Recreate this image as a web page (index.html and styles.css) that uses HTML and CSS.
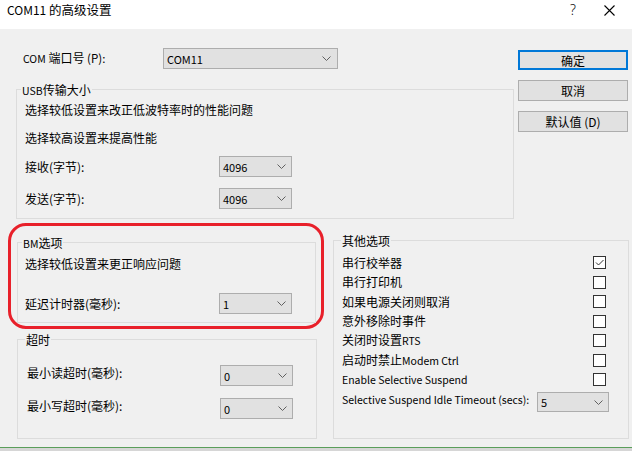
FILE: index.html
```html
<!DOCTYPE html>
<html lang="zh-CN">
<head>
<meta charset="utf-8">
<title>COM11 的高级设置</title>
<link rel="stylesheet" href="styles.css">
</head>
<body>
<div class="titlebar">
  <div class="title"><span class="en">COM11</span> 的高级设置</div>
  <div class="help">?</div>
  <svg class="close" width="11" height="11" viewBox="0 0 11 11"><path d="M0.5 0.5 L10.5 10.5 M10.5 0.5 L0.5 10.5" stroke="#000" stroke-width="1.1" fill="none"/></svg>
</div>

<div class="top">
  <div class="top-left">
    <div class="port-row">
      <span class="port-lbl"><span class="en">COM</span> 端口号 <span class="en en-p">(P):</span></span>
      <div class="combo combo-wide"><span class="en">COM11</span><svg class="chev" width="9" height="5" viewBox="0 0 9 5"><path d="M0.5 0.5 L4.5 4.5 L8.5 0.5" stroke="#606060" fill="none"/></svg></div>
    </div>
    <fieldset class="group usb">
      <legend><span class="en">USB</span>传输大小</legend>
      <div class="group-body usb-body">
        <div class="note note-1">选择较低设置来改正低波特率时的性能问题</div>
        <div class="note note-2">选择较高设置来提高性能</div>
        <div class="field-row row-recv"><span class="lbl">接收(字节):</span><div class="combo combo-small"><span class="en">4096</span><svg class="chev" width="9" height="5" viewBox="0 0 9 5"><path d="M0.5 0.5 L4.5 4.5 L8.5 0.5" stroke="#606060" fill="none"/></svg></div></div>
        <div class="field-row row-send"><span class="lbl">发送(字节):</span><div class="combo combo-small"><span class="en">4096</span><svg class="chev" width="9" height="5" viewBox="0 0 9 5"><path d="M0.5 0.5 L4.5 4.5 L8.5 0.5" stroke="#606060" fill="none"/></svg></div></div>
      </div>
    </fieldset>
  </div>
  <div class="buttons">
    <div class="btn btn-default">确定</div>
    <div class="btn">取消</div>
    <div class="btn">默认值 (D)</div>
  </div>
</div>

<div class="bottom">
  <div class="bottom-left">
    <div class="redmark">
      <fieldset class="group bm">
        <legend><span class="en">BM</span>选项</legend>
        <div class="group-body bm-body">
          <div class="note bm-note">选择较低设置来更正响应问题</div>
          <div class="field-row bm-row"><span class="lbl">延迟计时器(毫秒):</span><div class="combo combo-small"><span class="en">1</span><svg class="chev" width="9" height="5" viewBox="0 0 9 5"><path d="M0.5 0.5 L4.5 4.5 L8.5 0.5" stroke="#606060" fill="none"/></svg></div></div>
        </div>
      </fieldset>
    </div>
    <fieldset class="group timeout">
      <legend>超时</legend>
      <div class="group-body timeout-body">
        <div class="field-row to-row to-row-1"><span class="lbl">最小读超时(毫秒):</span><div class="combo combo-small"><span class="en">0</span><svg class="chev" width="9" height="5" viewBox="0 0 9 5"><path d="M0.5 0.5 L4.5 4.5 L8.5 0.5" stroke="#606060" fill="none"/></svg></div></div>
        <div class="field-row to-row to-row-2"><span class="lbl">最小写超时(毫秒):</span><div class="combo combo-small"><span class="en">0</span><svg class="chev" width="9" height="5" viewBox="0 0 9 5"><path d="M0.5 0.5 L4.5 4.5 L8.5 0.5" stroke="#606060" fill="none"/></svg></div></div>
      </div>
    </fieldset>
  </div>

  <fieldset class="group other">
    <legend>其他选项</legend>
    <div class="group-body other-body">
      <div class="opt-row"><span>串行校举器</span><span class="check"><svg width="11" height="11" viewBox="0 0 11 11"><path d="M2 5.5 L4.5 8 L9.5 3" stroke="#333" stroke-width="1" fill="none"/></svg></span></div>
      <div class="opt-row"><span>串行打印机</span><span class="check"></span></div>
      <div class="opt-row"><span>如果电源关闭则取消</span><span class="check"></span></div>
      <div class="opt-row"><span>意外移除时事件</span><span class="check"></span></div>
      <div class="opt-row"><span>关闭时设置<span class="en">RTS</span></span><span class="check"></span></div>
      <div class="opt-row"><span>启动时禁止<span class="en">Modem Ctrl</span></span><span class="check"></span></div>
      <div class="opt-row"><span class="en">Enable Selective Suspend</span><span class="check"></span></div>
      <div class="opt-row opt-last"><span class="en">Selective Suspend Idle Timeout (secs):</span><div class="combo combo-tiny"><span class="en">5</span><svg class="chev" width="9" height="5" viewBox="0 0 9 5"><path d="M0.5 0.5 L4.5 4.5 L8.5 0.5" stroke="#606060" fill="none"/></svg></div></div>
    </div>
  </fieldset>
</div>

<div class="footer"></div>
</body>
</html>
```
FILE: styles.css
```css
* { box-sizing: border-box; }
html, body { margin: 0; padding: 0; }
body {
  width: 632px;
  height: 451px;
  overflow: hidden;
  background: #f0f0f0;
  color: #000;
  font-family: "Noto Sans CJK SC", "Noto Sans", sans-serif;
  font-size: 12px;
  line-height: 16px;
}
.en { font-size: 10.5px; }
.en-p { font-size: 11.5px; }

/* title bar */
.titlebar {
  height: 29px;
  background: #fff;
  display: flex;
  align-items: flex-start;
  padding-left: 7px;
}
.title { flex: 1; margin-top: 2px; font-size: 12.5px; }
.title .en { font-size: 12px; }
.help { margin-top: 2px; width: 12px; font-size: 14px; font-family: "Noto Sans", sans-serif; font-weight: 300; color: #111; }
.close { margin: 5px 17px 0 22px; }

/* top area */
.top { display: flex; align-items: flex-start; }
.top-left { width: 498px; margin-left: 16px; }
.port-row {
  display: flex;
  align-items: center;
  height: 21px;
  margin-top: 19px;
  padding-left: 7px;
}
.port-lbl { width: 140px; }

/* combo boxes */
.combo {
  display: flex;
  align-items: center;
  justify-content: space-between;
  height: 21px;
  border: 1px solid #adadad;
  background: #e1e1e1;
  padding: 0 5px 0 3px;
}
.combo .en { line-height: 16px; font-size: 11px; }
.chev { flex: none; }
.combo-wide { width: 175px; padding-right: 6px; }
.combo-small { width: 73px; }
.combo-tiny { width: 72px; height: 20px; }

/* group boxes */
.group {
  margin: 0;
  padding: 0;
  border: 1px solid #dcdcdc;
  min-width: 0;
}
.group legend {
  padding: 0 1px;
  margin-left: 4px;
  height: 17px;
  line-height: 17px;
}
.usb { margin-top: 12px; }
.usb-body { padding: 0 8px 9px 8px; }
.note { height: 16px; }
.note-1 { margin-top: 4px; }
.note-2 { margin-top: 12px; }
.field-row { display: flex; align-items: center; height: 21px; }
.field-row .lbl { width: 194px; }
.row-recv { margin-top: 10px; }
.row-send { margin-top: 11px; }

/* buttons */
.buttons {
  width: 110px;
  margin-left: 4px;
  margin-top: 21px;
  display: flex;
  flex-direction: column;
  gap: 10px;
}
.btn {
  height: 21px;
  border: 1px solid #adadad;
  background: #e1e1e1;
  text-align: center;
  line-height: 19px;
}
.btn-default { border: 2px solid #0078d7; line-height: 17px; height: 20px; }

/* bottom area */
.bottom { display: flex; align-items: flex-start; }
.bottom-left { width: 316px; margin-left: 8px; }
.redmark {
  margin-top: 4px;
  border: 3px solid #e8202a;
  border-radius: 18px;
  padding: 8px 5px 3px 6px;
}
.bm-body { padding: 0 8px 8px 7px; }
.bm-note { margin-top: 5px; }
.bm-row { margin-top: 21px; }

.timeout { margin: 2px 0 0 9px; width: 300px; }
.timeout legend { margin-left: 7px; }
.timeout-body { padding: 0 8px 19px 9px; }
.to-row .lbl { width: 193px; margin-top: -6px; }
.to-row-1 { margin-top: 17px; }
.to-row-2 { margin-top: 12px; }

.other { margin: 13px 0 0 9px; width: 296px; }
.other legend { margin-left: 7px; }
.other-body { padding: 4px 19px 26px 8px; }
.opt-row {
  display: flex;
  align-items: center;
  justify-content: space-between;
  height: 19.5px;
}
.opt-last { height: 20px; margin-top: 2.5px; }
.opt-last > .en { margin-top: -5px; }
.check {
  width: 13px;
  height: 13px;
  margin-right: 3px;
  border: 1px solid #333;
  background: #fff;
  display: flex;
  align-items: center;
  justify-content: center;
}

.footer {
  margin-top: 8px;
  height: 4px;
  border-top: 1px solid #5a9e5a;
  background: #d6d6d6;
}
```
